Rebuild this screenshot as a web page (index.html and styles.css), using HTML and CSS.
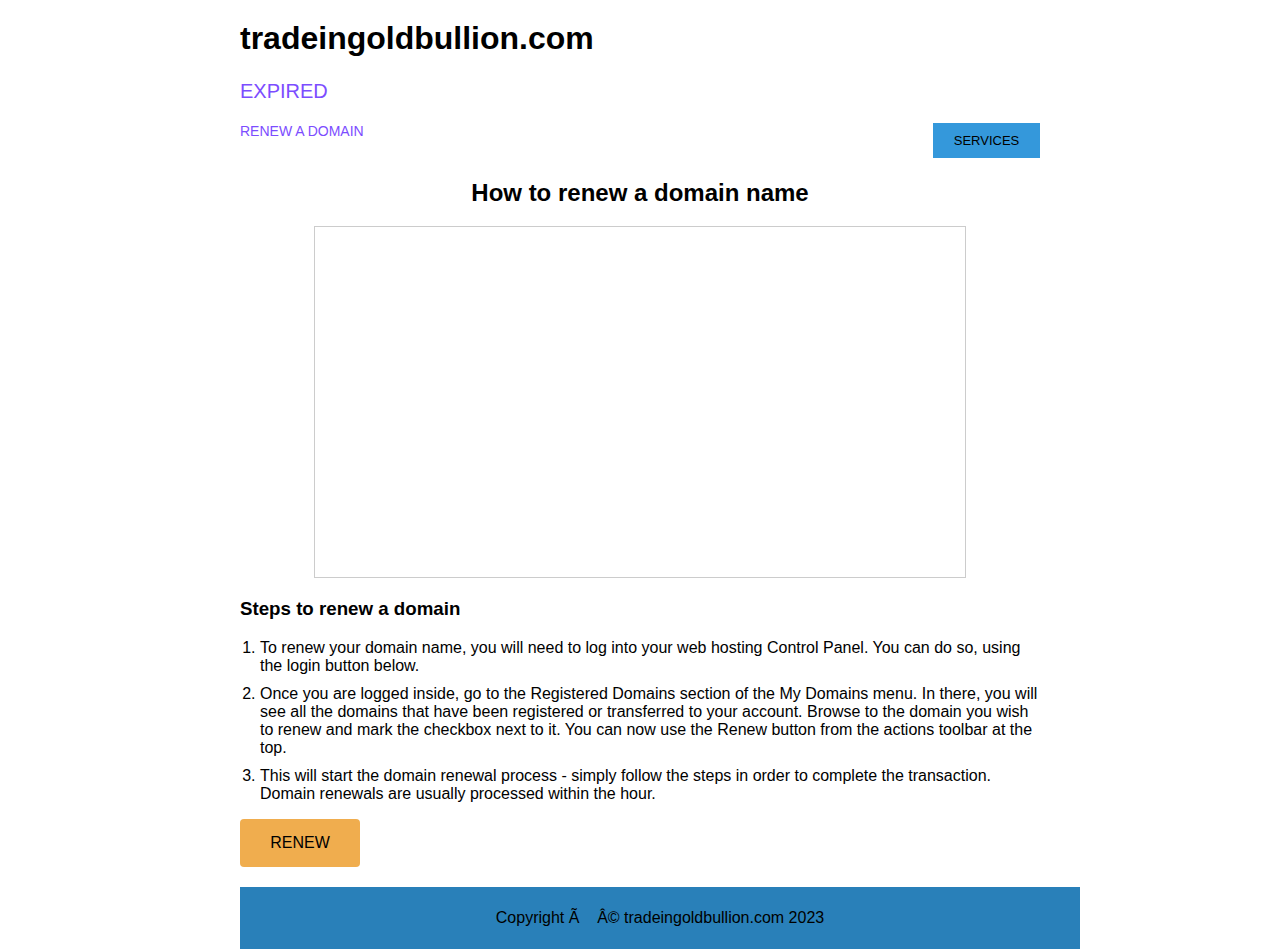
FILE: index.html
```html
<!DOCTYPE html>
<html>
<head>
<meta charset="utf-8">
<title>tradeingoldbullion.com</title>
<link rel="stylesheet" href="styles.css">
</head>
<body>
<div class="page">
  <header class="header">
    <h1 class="site-title">tradeingoldbullion.com</h1>
    <div class="status">EXPIRED</div>
    <div class="nav-row">
      <a class="renew-link" href="#">RENEW A DOMAIN</a>
      <a class="services-btn" href="#">SERVICES</a>
    </div>
  </header>
  <main class="main">
    <h2 class="video-title">How to renew a domain name</h2>
    <div class="video-wrap"><div class="video-frame"></div></div>
    <h3 class="steps-title">Steps to renew a domain</h3>
    <ol class="steps">
      <li>To renew your domain name, you will need to log into your web hosting Control Panel. You can do so, using the login button below.</li>
      <li>Once you are logged inside, go to the Registered Domains section of the My Domains menu. In there, you will see all the domains that have been registered or transferred to your account. Browse to the domain you wish to renew and mark the checkbox next to it. You can now use the Renew button from the actions toolbar at the top.</li>
      <li>This will start the domain renewal process - simply follow the steps in order to complete the transaction. Domain renewals are usually processed within the hour.</li>
    </ol>
    <a class="renew-btn" href="#">RENEW</a>
  </main>
  <footer class="footer">Copyright Ã&nbsp;&nbsp;&nbsp;&nbsp;Â© tradeingoldbullion.com 2023</footer>
</div>
</body>
</html>
```
FILE: styles.css
```css
html, body {
  margin: 0;
  padding: 0;
  background: #fff;
}
body {
  font-family: "Liberation Sans", Arial, sans-serif;
  color: #000;
}
.page {
  width: 800px;
  margin: 0 auto;
}
.site-title {
  font-size: 32px;
  font-weight: bold;
  margin: 0;
  padding-top: 19px;
  line-height: 38px;
}
.status {
  color: #7c4dff;
  font-size: 20px;
  margin-top: 23px;
  line-height: 23px;
}
.nav-row {
  display: flex;
  justify-content: space-between;
  align-items: flex-start;
  margin-top: 20px;
}
.renew-link {
  color: #7c4dff;
  font-size: 14px;
  text-decoration: none;
  line-height: 16px;
}
.services-btn {
  background: #3498db;
  color: #000;
  font-size: 13px;
  text-decoration: none;
  width: 107px;
  height: 35px;
  display: flex;
  align-items: center;
  justify-content: center;
}
.video-title {
  text-align: center;
  font-size: 24px;
  margin: 21px 0 0;
  line-height: 28px;
}
.video-wrap {
  display: flex;
  justify-content: center;
  margin-top: 19px;
}
.video-frame {
  width: 650px;
  height: 350px;
  border: 1px solid #cccccc;
}
.steps-title {
  font-size: 18.72px;
  font-weight: bold;
  margin: 20px 0 0;
  line-height: 22px;
}
.steps {
  margin: 19px 0 0;
  padding-left: 20px;
  font-size: 16px;
  line-height: 18px;
}
.steps li {
  margin-bottom: 10px;
}
.steps li:last-child {
  margin-bottom: 0;
}
.renew-btn {
  display: flex;
  align-items: center;
  justify-content: center;
  width: 120px;
  height: 48px;
  margin-top: 16px;
  background: #f0ad4e;
  border-radius: 4px;
  color: #000;
  font-size: 16px;
  text-decoration: none;
}
.footer {
  margin-top: 20px;
  width: 840px;
  box-sizing: border-box;
  background: #2980b9;
  color: #000;
  font-size: 16px;
  text-align: center;
  padding: 22px 20px 23px;
  line-height: 18px;
}
```
